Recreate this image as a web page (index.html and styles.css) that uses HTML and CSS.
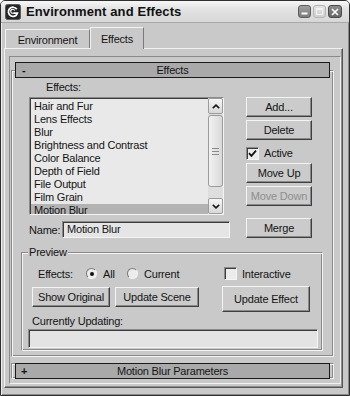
FILE: index.html
```html
<!DOCTYPE html>
<html lang="en">
<head>
    <meta charset="UTF-8">
    <title>Environment and Effects</title>
    <link rel="stylesheet" href="styles.css">
</head>
<body>
    <div class="window">
        <div class="titlebar">
            <svg class="app-icon" width="16" height="16" viewBox="0 0 16 16">
                <rect x="0.5" y="0.5" width="15" height="15" rx="2" fill="#262626" stroke="#5a5a5a"/>
                <path d="M11.8 5.2 A4.6 4.6 0 1 0 12.4 9.2 H8.2" fill="none" stroke="#fff" stroke-width="1.7"/>
                <path d="M9.6 6.6 A2 2 0 1 0 8.2 9.2" fill="none" stroke="#fff" stroke-width="1.1"/>
            </svg>
            <span class="title">Environment and Effects</span>
            <div class="controls">
                <span class="ctl ctl-min">
                    <svg width="7" height="7" viewBox="0 0 7 7"><rect x="0.5" y="4.5" width="6" height="2" fill="#fff"/></svg>
                </span>
                <span class="ctl ctl-max">
                    <svg width="7" height="7" viewBox="0 0 7 7"><rect x="0.5" y="0.5" width="6" height="6" fill="none" stroke="#f2f2f2"/><rect x="0.5" y="0.5" width="6" height="1.5" fill="#f2f2f2"/></svg>
                </span>
                <span class="ctl ctl-close">
                    <svg width="8" height="8" viewBox="0 0 8 8"><path d="M1 1 L7 7 M7 1 L1 7" stroke="#fff" stroke-width="1.6"/></svg>
                </span>
            </div>
        </div>

        <div class="client">
            <div class="tabs">
                <div class="tab tab-env">Environment</div>
                <div class="tab tab-fx active">Effects</div>
            </div>

            <div class="tab-body">
                <div class="rollout-area">
                    <div class="rollout">
                        <div class="rollout-head"><span class="toggle">-</span><span>Effects</span><span></span></div>
                        <div class="rollout-body">
                            <div class="effects-row">
                                <div class="effects-left">
                                    <div class="label-effects">Effects:</div>
                                    <div class="listbox">
                                        <ul class="items">
                                            <li>Hair and Fur</li>
                                            <li>Lens Effects</li>
                                            <li>Blur</li>
                                            <li>Brightness and Contrast</li>
                                            <li>Color Balance</li>
                                            <li>Depth of Field</li>
                                            <li>File Output</li>
                                            <li>Film Grain</li>
                                            <li class="selected">Motion Blur</li>
                                        </ul>
                                        <div class="vscroll">
                                            <div class="sb-btn">
                                                <svg width="8" height="5" viewBox="0 0 8 5"><polyline points="0.8,4.2 4,1.2 7.2,4.2" fill="none" stroke="#1a1a1a" stroke-width="1.7"/></svg>
                                            </div>
                                            <div class="sb-thumb"><span class="grip"></span></div>
                                            <div class="sb-track"></div>
                                            <div class="sb-btn">
                                                <svg width="8" height="5" viewBox="0 0 8 5"><polyline points="0.8,0.8 4,3.8 7.2,0.8" fill="none" stroke="#1a1a1a" stroke-width="1.7"/></svg>
                                            </div>
                                        </div>
                                    </div>
                                    <div class="name-row">
                                        <span class="name-label">Name:</span>
                                        <div class="field name-field">Motion Blur</div>
                                    </div>
                                </div>

                                <div class="effects-right">
                                    <div class="btn">Add...</div>
                                    <div class="btn gap3">Delete</div>
                                    <div class="check-row active-row">
                                        <span class="checkbox">
                                            <svg width="9" height="9" viewBox="0 0 9 9"><path d="M1 4.2 L3.4 6.8 L8 1.6" fill="none" stroke="#111" stroke-width="1.8"/></svg>
                                        </span>
                                        <span>Active</span>
                                    </div>
                                    <div class="btn">Move Up</div>
                                    <div class="btn gap3 disabled">Move Down</div>
                                    <div class="btn merge">Merge</div>
                                </div>
                            </div>

                            <div class="preview">
                                <div class="preview-label">Preview</div>
                                <div class="preview-grid">
                                    <div class="pv-row1">
                                        <span class="pv-effects">Effects:</span>
                                        <span class="radio checked"></span>
                                        <span class="radio-text">All</span>
                                        <span class="radio"></span>
                                        <span class="radio-text">Current</span>
                                    </div>
                                    <div class="check-row pv-inter">
                                        <span class="checkbox"></span>
                                        <span>Interactive</span>
                                    </div>
                                    <div class="pv-buttons">
                                        <div class="btn btn-show">Show Original</div>
                                        <div class="btn btn-scene">Update Scene</div>
                                    </div>
                                    <div class="btn btn-effect">Update Effect</div>
                                </div>
                                <div class="updating-label">Currently Updating:</div>
                                <div class="field progress"></div>
                            </div>
                        </div>
                    </div>

                    <div class="rollout-closed">
                        <div class="rollout-head"><span class="toggle plus">+</span><span>Motion Blur Parameters</span><span></span></div>
                    </div>
                </div>
            </div>
        </div>
    </div>
</body>
</html>
```

FILE: styles.css
```css
body {
    margin: 0;
    font-family: "Liberation Sans", Arial, sans-serif;
    font-size: 11px;
    letter-spacing: -0.2px;
    color: #141414;
    background: #fff;
}

/* window frame */
.window {
    width: 350px;
    height: 396px;
    box-sizing: border-box;
    border: 1px solid #2e2e2e;
    border-radius: 5px 5px 0 0;
    background: #c9c9c9;
    display: flex;
    flex-direction: column;
    overflow: hidden;
    box-shadow: inset 1px 0 #ededed, inset -1px 0 #8a8a8a, inset 0 -1px #8a8a8a;
}
.titlebar {
    height: 21px;
    flex: none;
    border-bottom: 1px solid #a8a8a8;
    background: linear-gradient(#f7f7f7, #e4e4e4 35%, #d7d7d7);
    display: flex;
    align-items: center;
    padding-left: 4px;
}
.app-icon {
    flex: none;
    margin-right: 5px;
}
.title {
    font-weight: bold;
    font-size: 13px;
    letter-spacing: 0.1px;
    color: #111;
}
.controls {
    margin-left: auto;
    display: flex;
    gap: 2px;
    padding-right: 7px;
}
.ctl {
    width: 13px;
    height: 13px;
    box-sizing: border-box;
    border-radius: 3px;
    display: flex;
    align-items: center;
    justify-content: center;
}
.ctl-min {
    background: linear-gradient(#a0a0a0, #7c7c7c);
    border: 1px solid #5e5e5e;
}
.ctl-max {
    background: linear-gradient(#e2e2e2, #cfcfcf);
    border: 1px solid #b4b4b4;
}
.ctl-close {
    width: 14px;
    background: linear-gradient(#8e8e8e, #666);
    border: 1px solid #4a4a4a;
}

/* tabs */
.client {
    flex: 1;
    padding: 4px 0 0 3px;
    display: flex;
    flex-direction: column;
}
.tabs {
    height: 21px;
    flex: none;
    display: flex;
    align-items: flex-end;
    padding-left: 1px;
}
.tab {
    height: 19px;
    box-sizing: border-box;
    padding-top: 2px;
    border: 1px solid;
    border-color: #f2f2f2 #7a7a7a transparent #f2f2f2;
    border-bottom: none;
    display: flex;
    align-items: center;
    justify-content: center;
}
.tab-env {
    width: 85px;
}
.tab-fx {
    width: 54px;
}
.tab.active {
    height: 22px;
    margin-bottom: -1px;
    padding-top: 0;
    background: #c9c9c9;
    position: relative;
    z-index: 1;
}
.tab-body {
    width: 339px;
    height: 340px;
    box-sizing: border-box;
    border: 1px solid;
    border-color: #f2f2f2 #555 #555 #f2f2f2;
    box-shadow: inset -1px -1px #8c8c8c;
    padding: 7px 1px 3px 4px;
    display: flex;
}

/* rollouts */
.rollout-area {
    flex: 1;
    border: 1px solid;
    border-color: #8a8a8a #f2f2f2 #f2f2f2 #8a8a8a;
    padding: 5px 0 0 1px;
}
.rollout,
.rollout-closed {
    width: 323px;
    box-sizing: border-box;
}
.rollout-head {
    height: 16px;
    box-sizing: border-box;
    margin: 0 4px;
    border: 1px solid #1a1a1a;
    background: #a9a9a9;
    display: grid;
    grid-template-columns: 1fr auto 1fr;
    align-items: center;
    line-height: 14px;
    position: relative;
    z-index: 1;
}
.toggle {
    padding-left: 6px;
    font-weight: bold;
}
.toggle.plus {
    padding-left: 5px;
}
.rollout-body {
    margin-top: -8px;
    border: 1px solid;
    border-color: #8a8a8a #f4f4f4 #f4f4f4 #8a8a8a;
    box-shadow: inset 1px 1px #f4f4f4, inset -1px -1px #8a8a8a;
    padding: 10px 0 5px 0;
}
.rollout-closed {
    margin-top: 6px;
    border: 1px solid;
    border-color: #8a8a8a #f4f4f4 #f4f4f4 #8a8a8a;
    box-shadow: inset 1px 1px #f4f4f4, inset -1px -1px #8a8a8a;
    padding: 0 1px;
}
.rollout-closed .rollout-head {
    margin: -1px 2px;
}

/* effects list */
.effects-row {
    display: flex;
    padding-left: 17px;
}
.effects-left {
    width: 201px;
    flex: none;
}
.label-effects {
    padding-left: 17px;
    line-height: 13px;
}
.listbox {
    width: 195px;
    height: 118px;
    margin-top: 3px;
    box-sizing: border-box;
    border: 1px solid;
    border-color: #8a8a8a #f4f4f4 #f4f4f4 #8a8a8a;
    box-shadow: inset 1px 1px #3c3c3c;
    background: #e9e9e9;
    display: flex;
    overflow: hidden;
}
.items {
    flex: 1;
    list-style: none;
    margin: 0;
    padding: 2px 0 0 1px;
}
.items li {
    line-height: 13px;
    padding-left: 3px;
    white-space: nowrap;
}
.items li.selected {
    background: #b3b3b3;
}
.vscroll {
    width: 15px;
    flex: none;
    display: flex;
    flex-direction: column;
    background: #dedede;
}
.sb-btn {
    height: 16px;
    flex: none;
    box-sizing: border-box;
    border: 1px solid #9c9c9c;
    border-radius: 2px;
    background: linear-gradient(#f6f6f6, #d8d8d8);
    display: flex;
    align-items: center;
    justify-content: center;
}
.sb-thumb {
    height: 72px;
    margin-top: 1px;
    flex: none;
    box-sizing: border-box;
    border: 1px solid #9a9a9a;
    border-radius: 3px;
    background: linear-gradient(to right, #f2f2f2, #d9d9d9);
    display: flex;
    align-items: center;
    justify-content: center;
}
.grip {
    width: 7px;
    height: 5px;
    border-top: 1px solid #8a8a8a;
    border-bottom: 1px solid #8a8a8a;
    background: linear-gradient(#8a8a8a, #8a8a8a) center / 7px 1px no-repeat;
}
.sb-track {
    flex: 1;
}
.name-row {
    margin-top: 6px;
    height: 17px;
    display: flex;
    align-items: center;
}
.name-label {
    width: 33px;
    flex: none;
}
.field {
    box-sizing: border-box;
    border: 1px solid;
    border-color: #8a8a8a #f4f4f4 #f4f4f4 #8a8a8a;
    box-shadow: inset 1px 1px #3c3c3c;
    background: #e5e5e5;
}
.name-field {
    width: 168px;
    height: 17px;
    flex: none;
    padding-left: 4px;
    line-height: 15px;
}

/* buttons */
.effects-right {
    width: 66px;
    margin-left: 16px;
    padding-top: 16px;
    display: flex;
    flex-direction: column;
}
.btn {
    height: 20px;
    flex: none;
    box-sizing: border-box;
    border: 1px solid;
    border-color: #f4f4f4 #3e3e3e #3e3e3e #f4f4f4;
    box-shadow: inset -1px -1px #8a8a8a;
    background: #cbcbcb;
    display: flex;
    align-items: center;
    justify-content: center;
    white-space: nowrap;
}
.btn.gap3 {
    margin-top: 3px;
}
.btn.disabled {
    color: #8e8e8e;
}
.btn.merge {
    margin-top: 12px;
}
.check-row {
    display: flex;
    align-items: center;
    gap: 5px;
}
.active-row {
    height: 20px;
    margin-top: 3px;
}
.checkbox {
    width: 13px;
    height: 13px;
    flex: none;
    box-sizing: border-box;
    border: 1px solid;
    border-color: #8a8a8a #f4f4f4 #f4f4f4 #8a8a8a;
    box-shadow: inset 1px 1px #3c3c3c;
    background: #ececec;
    display: flex;
    align-items: center;
    justify-content: center;
}

/* preview group */
.preview {
    width: 302px;
    margin: 14px 0 0 9px;
    box-sizing: border-box;
    border: 1px solid;
    border-color: #8a8a8a #f4f4f4 #f4f4f4 #8a8a8a;
    box-shadow: inset 1px 1px #f4f4f4, inset -1px -1px #8a8a8a;
    padding: 0 0 2px 6px;
}
.preview-label {
    width: fit-content;
    margin-top: -7px;
    padding: 0 1px;
    line-height: 13px;
    background: #c9c9c9;
}
.preview-grid {
    margin-top: 7px;
    display: grid;
    grid-template-columns: 194px auto;
    row-gap: 5px;
}
.pv-row1 {
    height: 15px;
    padding-left: 10px;
    display: flex;
    align-items: center;
}
.pv-effects {
    width: 48px;
}
.radio {
    width: 11px;
    height: 11px;
    flex: none;
    box-sizing: border-box;
    border-radius: 50%;
    border: 1px solid;
    border-color: #7a7a7a #f4f4f4 #f4f4f4 #7a7a7a;
    background: #ececec;
    display: flex;
    align-items: center;
    justify-content: center;
}
.radio.checked::after {
    content: "";
    width: 4px;
    height: 4px;
    border-radius: 50%;
    background: #111;
}
.radio-text {
    margin-left: 6px;
    width: 24px;
}
.pv-inter {
    padding-left: 2px;
}
.pv-buttons {
    display: flex;
    gap: 5px;
    padding: 1px 0 0 4px;
}
.btn-show {
    width: 78px;
}
.btn-scene {
    width: 84px;
}
.btn-effect {
    width: 88px;
    height: 26px;
}
.updating-label {
    margin-top: 3px;
    padding-left: 4px;
    line-height: 13px;
}
.progress {
    width: 290px;
    height: 19px;
    margin-top: 1px;
    background: #e3e3e3;
}
```
